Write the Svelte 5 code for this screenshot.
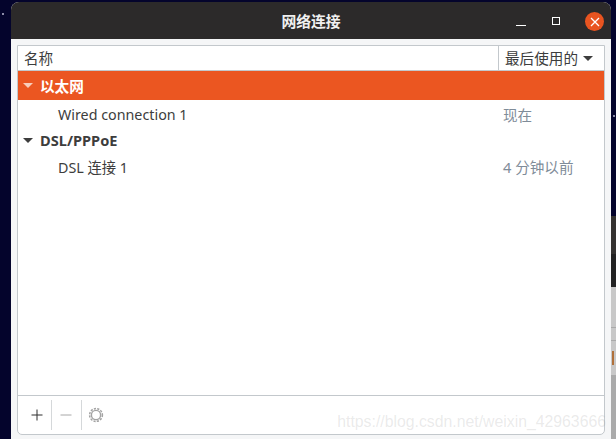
<script>
	const groups = [
		{ name: '以太网', selected: true, rows: [{ name: 'Wired connection 1', used: '现在' }] },
		{ name: 'DSL/PPPoE', selected: false, rows: [{ name: 'DSL 连接 1', used: '4 分钟以前' }] }
	];
</script>

<div class="desk">
	<i class="star s1"></i>
	<i class="star s2"></i>
	<div class="window">
		<header class="titlebar">
			<span class="title">网络连接</span>
			<div class="controls">
				<svg class="min" width="10" height="10" viewBox="0 0 10 10"><path d="M0 8.5h10" stroke="#fff" stroke-width="1.2" /></svg>
				<svg class="max" width="9" height="9" viewBox="0 0 9 9"><rect x="0.5" y="0.5" width="7" height="7" fill="none" stroke="#fff" stroke-width="1" /></svg>
				<span class="close">
					<svg width="10" height="10" viewBox="0 0 10 10"><path d="M1 1l8 8M9 1l-8 8" stroke="#fff" stroke-width="1.3" /></svg>
				</span>
			</div>
		</header>
		<div class="body">
			<div class="frame">
				<div class="columns">
					<div class="col-name">名称</div>
					<div class="col-used">最后使用的 <i class="arrow"></i></div>
				</div>
				<div class="list">
					{#each groups as g}
						<div class="group" class:selected={g.selected}>
							<i class="arrow"></i>
							<span>{g.name}</span>
						</div>
						{#each g.rows as r}
							<div class="row">
								<span class="name">{r.name}</span>
								<span class="used">{r.used}</span>
							</div>
						{/each}
					{/each}
				</div>
				<div class="toolbar">
					<button class="tool first">
						<svg width="14" height="14" viewBox="0 0 14 14"><path d="M7 1.5v11M1.5 7h11" stroke="#2e2e2e" stroke-width="1" /></svg>
					</button>
					<button class="tool minus">
						<svg width="14" height="14" viewBox="0 0 14 14"><path d="M1.5 7h11" stroke="#a8a8a8" stroke-width="1" /></svg>
					</button>
					<button class="tool gear">
						<svg width="16" height="16" viewBox="0 0 16 16">
							<circle cx="8" cy="8" r="4.6" fill="none" stroke="#a3a3a3" stroke-width="1.4" />
							<circle cx="8" cy="8" r="6.4" fill="none" stroke="#a3a3a3" stroke-width="1.5" stroke-dasharray="2.2 1.2" />
						</svg>
					</button>
				</div>
				<span class="watermark">https://blog.csdn.net/weixin_42963666</span>
			</div>
		</div>
	</div>
	<div class="side">
		<div class="side-navy"></div>
		<div class="side-brown"></div>
		<div class="side-dark"></div>
		<div class="side-light"></div>
		<div class="side-light line"></div>
		<div class="side-light line mid"><span class="glyph"></span></div>
		<div class="side-grey"></div>
	</div>
</div>

<style>
	:global(body) {
		margin: 0;
		background: #04042c;
	}
	.desk {
		width: 616px;
		height: 439px;
		position: relative;
		display: flex;
		overflow: hidden;
		padding-left: 11px;
		box-sizing: border-box;
		background: #04042c;
		font-family: 'Noto Sans', 'Noto Sans CJK SC', sans-serif;
		font-size: 14.6px;
		color: #3d3d3d;
	}
	.star {
		position: absolute;
		width: 2px;
		height: 2px;
		background: #8c8ca8;
	}
	.s1 {
		left: 2px;
		top: 13px;
	}
	.s2 {
		left: 613px;
		top: 115px;
	}
	.window {
		width: 600px;
		height: 437px;
		margin-top: 2px;
		display: flex;
		flex-direction: column;
		border-radius: 8px 8px 0 0;
		overflow: hidden;
		background: #f5f6f7;
	}
	.titlebar {
		height: 37px;
		flex: none;
		background: #2c2a2a;
		position: relative;
		display: flex;
		align-items: center;
		justify-content: center;
	}
	.title {
		color: #f0f0f0;
		font-weight: 700;
		font-size: 14.8px;
	}
	.controls {
		position: absolute;
		left: 505px;
		top: 10px;
		display: flex;
		align-items: center;
	}
	.min {
		margin-right: 26px;
	}
	.max {
		margin-right: 24px;
	}
	.close {
		width: 19px;
		height: 19px;
		border-radius: 50%;
		background: #e95420;
		display: flex;
		align-items: center;
		justify-content: center;
	}
	.body {
		flex: 1;
		padding: 6px 6px 4px 6px;
		display: flex;
		min-height: 0;
	}
	.frame {
		flex: 1;
		position: relative;
		display: flex;
		flex-direction: column;
		background: #fff;
		border: 1px solid #c3c8cc;
		border-radius: 0 0 5px 5px;
		min-width: 0;
	}
	.columns {
		height: 24px;
		flex: none;
		display: flex;
		border-bottom: 1px solid #c3c8cc;
		line-height: 24px;
	}
	.col-name {
		flex: 1;
		padding-left: 6px;
	}
	.col-used {
		width: 106px;
		box-sizing: border-box;
		padding-left: 6px;
		border-left: 1px solid #c3c8cc;
		display: flex;
		align-items: center;
		gap: 5px;
	}
	.arrow {
		width: 0;
		height: 0;
		border-left: 5px solid transparent;
		border-right: 5px solid transparent;
		border-top: 5px solid #3d3d3d;
		flex: none;
	}
	.group {
		height: 29px;
		display: flex;
		align-items: center;
		gap: 7px;
		padding-left: 5px;
		font-weight: 700;
		color: #3d3d3d;
	}
	.group:not(.selected) {
		height: 24px;
	}
	.group.selected {
		background: #eb5621;
		color: #fff;
	}
	.group.selected .arrow {
		border-top-color: #f8cdbb;
	}
	.row {
		height: 28px;
		display: flex;
		align-items: center;
		justify-content: space-between;
		padding-left: 40px;
	}
	.name {
		font-size: 14.3px;
	}
	.used {
		width: 101px;
		color: #7f8c99;
	}
	.list {
		flex: 1;
	}
	.toolbar {
		height: 38px;
		flex: none;
		border-top: 1px solid #c3c8cc;
		display: flex;
		align-items: center;
	}
	.tool {
		width: 30px;
		height: 30px;
		padding: 0;
		border: 0;
		background: none;
		border-right: 1px solid #d5d8da;
		display: flex;
		align-items: center;
		justify-content: center;
	}
	.tool.first {
		width: 34px;
		padding-left: 4px;
	}
	.tool.minus {
		padding-right: 2px;
	}
	.tool.gear {
		border-right: 0;
		padding-right: 2px;
	}
	.watermark {
		position: absolute;
		right: -2px;
		bottom: 3px;
		font-family: 'Liberation Sans', sans-serif;
		font-size: 15.8px;
		color: rgba(150, 150, 150, 0.2);
	}
	.side {
		width: 5px;
		height: 439px;
		display: flex;
		flex-direction: column;
	}
	.side-navy {
		height: 216px;
		background: #04042c;
	}
	.side-brown {
		height: 38px;
		background: #343230;
	}
	.side-dark {
		height: 33px;
		background: #222;
	}
	.side-light {
		height: 41px;
		background: #c8c8c8;
		border-bottom: 1px solid #aaa;
		box-sizing: border-box;
	}
	.side-light.line {
		height: 13px;
	}
	.side-light.mid {
		height: 35px;
		display: flex;
		align-items: center;
	}
	.glyph {
		width: 2px;
		height: 14px;
		margin-left: 1px;
		background: #b0703a;
	}
	.side-grey {
		flex: 1;
		background: #aaa;
	}
</style>
